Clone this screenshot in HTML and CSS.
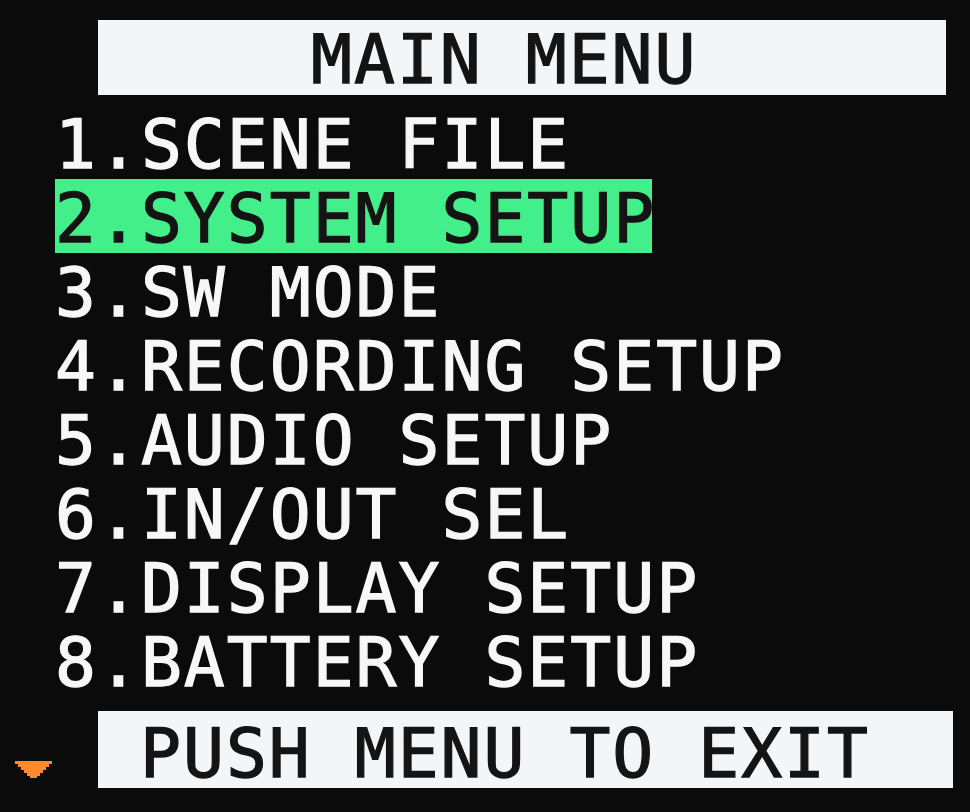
FILE: index.html
```html
<!DOCTYPE html>
<html>
<head>
  <title>Main Menu</title>
  <link rel="stylesheet" href="styles.css">
</head>
<body>
  <div class="screen">
    <div class="title-bar">MAIN MENU</div>

    <div class="menu">
      <div class="item">1.SCENE FILE</div>
      <div class="item active">2.SYSTEM SETUP</div>
      <div class="item">3.SW MODE</div>
      <div class="item">4.RECORDING SETUP</div>
      <div class="item">5.AUDIO SETUP</div>
      <div class="item">6.IN/OUT SEL</div>
      <div class="item">7.DISPLAY SETUP</div>
      <div class="item">8.BATTERY SETUP</div>
    </div>

    <div class="footer">
      <svg class="arrow" width="37" height="17" viewBox="0 0 37 17">
        <polygon fill="#ff8a2e" points="0,0 37,0 37,3 34,3 34,6 31,6 31,9 28,9 28,12 25,12 25,15 22,15 22,17 15,17 15,15 12,15 12,12 9,12 9,9 6,9 6,6 3,6 3,3 0,3"/>
      </svg>
      <div class="exit-bar">PUSH MENU TO EXIT</div>
    </div>
  </div>
</body>
</html>
```

FILE: styles.css
```css
body {
  margin: 0;
  background: #0b0b0c;
}

.screen {
  width: 970px;
  height: 812px;
  box-sizing: border-box;
  padding-top: 20px;
  font-family: "DejaVu Sans Mono", "Liberation Mono", monospace;
  font-size: 68px;
  letter-spacing: 2px;
  -webkit-text-stroke: 1.3px currentColor;
  overflow: hidden;
}

.title-bar {
  margin-left: 98px;
  width: 848px;
  height: 75px;
  box-sizing: border-box;
  padding: 4px 0 0 213px;
  line-height: 71px;
  white-space: pre;
  background: #f3f6f9;
  color: #141414;
}

.menu {
  margin-top: 10px;
}

.item {
  width: fit-content;
  margin-left: 55px;
  padding-top: 6px;
  line-height: 68px;
  white-space: pre;
  color: #f7f7f7;
}

.item.active {
  width: 597px;
  background: #43ef8b;
  color: #141414;
}

.footer {
  display: flex;
  align-items: flex-end;
  margin-top: 14px;
}

.arrow {
  margin: 0 0 10px 15px;
}

.exit-bar {
  margin-left: 46px;
  width: 855px;
  height: 77px;
  box-sizing: border-box;
  padding: 8px 0 0 42px;
  line-height: 69px;
  white-space: pre;
  background: #f3f6f9;
  color: #141414;
}
```
